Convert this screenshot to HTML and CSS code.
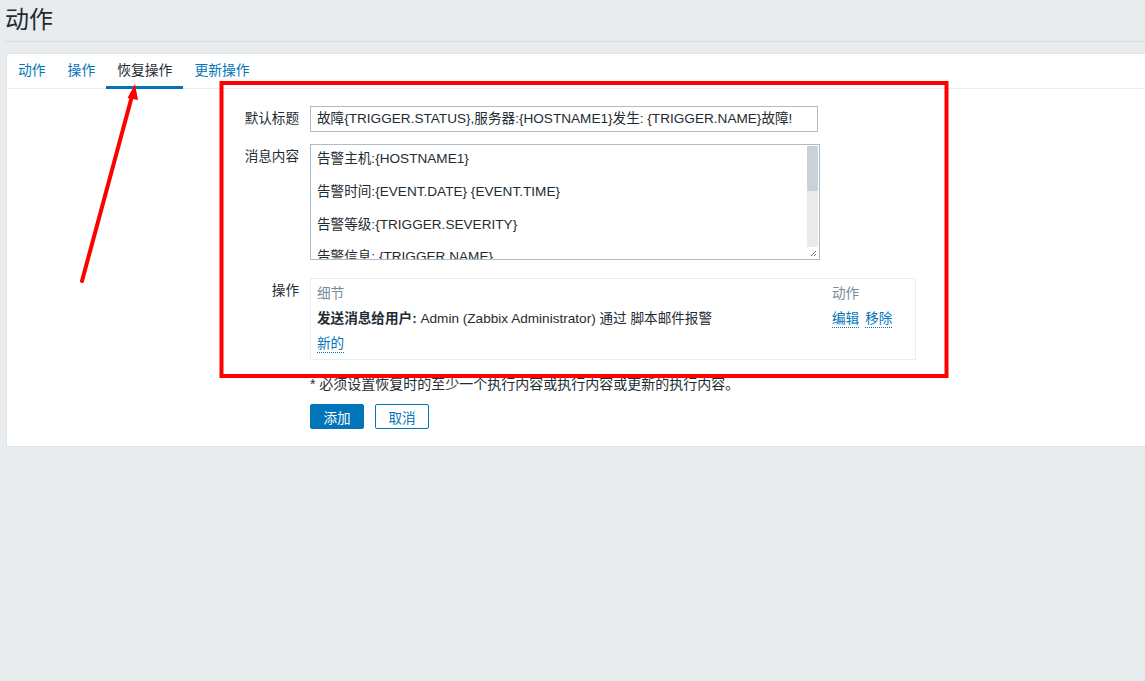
FILE: index.html
```html
<!DOCTYPE html>
<html lang="zh-CN">
<head>
<meta charset="utf-8">
<title>动作</title>
<link rel="stylesheet" href="styles.css">
</head>
<body>
<header class="page-header">
  <h1 class="page-title">动作</h1>
</header>
<main class="panel">
  <nav class="tabs">
    <a class="tab">动作</a>
    <a class="tab">操作</a>
    <a class="tab tab-active">恢复操作</a>
    <a class="tab">更新操作</a>
  </nav>
  <div class="form">
    <div class="row row-title">
      <label class="label label-mid">默认标题</label>
      <div class="field">
        <div class="input">故障{TRIGGER.STATUS},服务器:{HOSTNAME1}发生: {TRIGGER.NAME}故障!</div>
      </div>
    </div>
    <div class="row row-msg">
      <label class="label label-top">消息内容</label>
      <div class="field">
        <div class="textarea">
          <div class="ta-text">
            <p>告警主机:{HOSTNAME1}</p>
            <p>告警时间:{EVENT.DATE} {EVENT.TIME}</p>
            <p>告警等级:{TRIGGER.SEVERITY}</p>
            <p>告警信息: {TRIGGER.NAME}</p>
          </div>
          <div class="ta-scroll"><div class="ta-thumb"></div></div>
          <div class="ta-grip">
            <svg width="8" height="8" viewBox="0 0 8 8"><path d="M7 2 L2 7 M7 5 L5 7" stroke="#777" stroke-width="1" fill="none"/></svg>
          </div>
        </div>
      </div>
    </div>
    <div class="row row-ops">
      <label class="label label-ops">操作</label>
      <div class="field">
        <div class="ops">
          <div class="ops-row ops-head">
            <div class="ops-detail">细节</div>
            <div class="ops-action">动作</div>
          </div>
          <div class="ops-row">
            <div class="ops-detail"><b>发送消息给用户:</b> Admin (Zabbix Administrator) 通过 脚本邮件报警</div>
            <div class="ops-action"><a class="link">编辑</a><a class="link">移除</a></div>
          </div>
          <div class="ops-row">
            <div class="ops-detail"><a class="link">新的</a></div>
          </div>
        </div>
      </div>
    </div>
    <div class="row row-note">
      <div class="label"></div>
      <div class="field note">* 必须设置恢复时的至少一个执行内容或执行内容或更新的执行内容。</div>
    </div>
    <div class="row row-buttons">
      <div class="label"></div>
      <div class="field buttons">
        <button class="btn btn-primary">添加</button>
        <button class="btn btn-alt">取消</button>
      </div>
    </div>
  </div>
</main>
<svg class="annotation" width="1145" height="681" viewBox="0 0 1145 681">
  <rect x="221.5" y="83" width="725" height="293" fill="none" stroke="#ff0000" stroke-width="4"/>
  <line x1="82" y1="281" x2="132" y2="96" stroke="#ff0000" stroke-width="4" stroke-linecap="round"/>
  <polygon points="135,84 127.5,98 138,100" fill="#ff0000"/>
</svg>
</body>
</html>
```

FILE: styles.css
```css
html, body {
  margin: 0;
  padding: 0;
}
body {
  background: #e9ecef;
  font-family: "Liberation Sans", "Noto Sans CJK SC", sans-serif;
  font-size: 13.6px;
  color: #1f2c33;
  overflow: hidden;
  width: 1145px;
  height: 681px;
  position: relative;
}
.page-header {
  margin-left: 5px;
  height: 41px;
  border-bottom: 1px solid #d9dde1;
}
.page-title {
  margin: 0;
  font-size: 24px;
  font-weight: normal;
  line-height: 40px;
  color: #1f2c33;
}
.panel {
  margin: 11px -4px 0 6px;
  background: #ffffff;
  border: 1px solid #dfe4e7;
  padding-bottom: 17px;
}
.tabs {
  display: flex;
  height: 34px;
  border-bottom: 1px solid #ebeef0;
}
.tab {
  padding: 0 11px;
  line-height: 33px;
  color: #0275b8;
  border-bottom: 3px solid transparent;
  margin-bottom: -1px;
  box-sizing: border-box;
  height: 35px;
  font-size: 13.8px;
}
.tab-active {
  color: #1f2c33;
  border-bottom-color: #0275b8;
}
.form {
  padding-top: 17px;
}
.row {
  display: grid;
  grid-template-columns: 292px 1fr;
  column-gap: 11px;
}
.label {
  text-align: right;
  color: #1f2c33;
}
.label-mid {
  line-height: 26px;
}
.label-top {
  padding-top: 4px;
  line-height: 18px;
}
.label-ops {
  padding-top: 4px;
  line-height: 18px;
}
.row-msg {
  margin-top: 12px;
}
.row-ops {
  margin-top: 18px;
}
.row-note {
  margin-top: 16px;
}
.row-buttons {
  margin-top: 12px;
}
.input {
  width: 508px;
  height: 26px;
  box-sizing: border-box;
  border: 1px solid #acbbc4;
  padding: 0 6px;
  line-height: 24px;
  white-space: nowrap;
  overflow: hidden;
}
.textarea {
  position: relative;
  width: 510px;
  height: 116px;
  box-sizing: border-box;
  border: 1px solid #acbbc4;
  overflow: hidden;
}
.ta-text {
  padding: 6px 20px 0 6px;
}
.ta-text p {
  margin: 0 0 16.4px 0;
  line-height: 16.4px;
}
.ta-scroll {
  position: absolute;
  right: 1px;
  top: 1px;
  bottom: 12px;
  width: 11px;
  background: #eaeaea;
}
.ta-thumb {
  height: 45px;
  background: #c9d2d7;
}
.ta-grip {
  position: absolute;
  right: 0;
  bottom: 0;
  width: 12px;
  height: 12px;
  background: #ffffff;
  display: flex;
  align-items: center;
  justify-content: center;
}
.ops {
  width: 606px;
  box-sizing: border-box;
  border: 1px solid #ebeef0;
  padding: 2px 0 3px 0;
}
.ops-row {
  display: flex;
  line-height: 25px;
}
.ops-head {
  color: #768d99;
}
.ops-detail {
  width: 515px;
  padding-left: 6px;
}
.ops-action {
  display: flex;
  gap: 6px;
}
.link {
  color: #0275b8;
  text-decoration: none;
  border-bottom: 1px dotted #0275b8;
  line-height: 17px;
  align-self: center;
}
.ops-detail .link {
  display: inline-block;
}
.note {
  line-height: 16px;
  color: #1f2c33;
  font-size: 14px;
}
.buttons {
  display: flex;
  gap: 11px;
}
.btn {
  width: 54px;
  height: 25px;
  box-sizing: border-box;
  font-family: "Liberation Sans", "Noto Sans CJK SC", sans-serif;
  font-size: 13.6px;
  border-radius: 2px;
  padding: 0;
}
.btn-primary {
  background: #0275b8;
  border: 1px solid #0275b8;
  color: #ffffff;
}
.btn-alt {
  background: #ffffff;
  border: 1px solid #0275b8;
  color: #0275b8;
}
.annotation {
  position: absolute;
  left: 0;
  top: 0;
  pointer-events: none;
}
```
